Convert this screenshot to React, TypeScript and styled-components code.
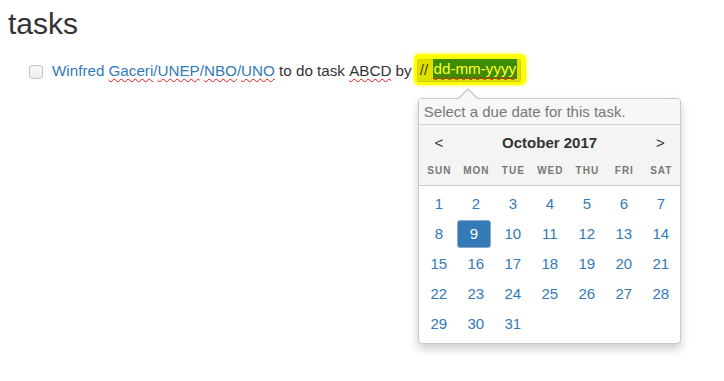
import React from "react";
import styled, { createGlobalStyle } from "styled-components";

const GlobalStyle = createGlobalStyle`
  html, body {
    margin: 0;
    padding: 0;
    background: #ffffff;
    color: #333333;
    font-family: "Liberation Sans", Arial, Helvetica, sans-serif;
    font-size: 15px;
  }
`;

const Page = styled.div`
  box-sizing: border-box;
  min-height: 381px;
  padding: 0 8px;
`;

const Title = styled.h2`
  margin: 7px 0 0;
  font-size: 30px;
  font-weight: 500;
  line-height: 33px;
  color: #333333;
`;

const TaskRow = styled.div`
  display: flex;
  align-items: center;
  height: 23px;
  margin-top: 19px;
  padding-left: 21px;
  line-height: 20px;
  font-size: 15.2px;
`;

const Check = styled.input`
  appearance: none;
  box-sizing: border-box;
  width: 14px;
  height: 14px;
  margin: 3px 9px 0 0;
  border: 1px solid #c4c4c4;
  border-radius: 3px;
  background: linear-gradient(#fafafa, #ececec);
`;

const Misspelled = styled.span`
  text-decoration: underline wavy #e8141b;
  text-decoration-thickness: 1px;
  text-underline-offset: 2px;
  text-decoration-skip-ink: none;
`;

const Owner = styled.span`
  color: #337ab7;
`;

const Plain = styled.span`
  white-space: pre;
`;

const Field = styled.div`
  position: relative;
  display: flex;
  margin-left: 1px;
`;

const DateInput = styled.div`
  box-sizing: border-box;
  display: flex;
  align-items: flex-start;
  width: 104px;
  height: 23px;
  padding-left: 2px;
  border: 1px solid #d2d200;
  background: #e0e000;
  color: #4a4500;
  box-shadow: 1px -1px 0 4px #ffff00, 1px -1px 3px 5px rgba(255, 255, 0, 0.55);
  border-radius: 2px;
  white-space: pre;
`;

const Selection = styled.span`
  display: inline-block;
  margin-top: -1px;
  padding: 0 1px;
  height: 20px;
  background: #3e8c00;
  color: #ffff33;
`;

const Popover = styled.div`
  position: absolute;
  top: 39px;
  left: 1px;
  box-sizing: border-box;
  width: 263px;
  border: 1px solid #c8c8c8;
  border-radius: 4px;
  background: #ffffff;
  box-shadow: 0 5px 10px rgba(0, 0, 0, 0.2);
  font-size: 15px;
  z-index: 5;
`;

const ArrowOuter = styled.span`
  position: absolute;
  top: -11px;
  left: 39px;
  width: 0;
  height: 0;
  border-style: solid;
  border-width: 0 10px 10px 10px;
  border-color: transparent transparent #c8c8c8 transparent;
`;

const ArrowInner = styled.span`
  position: absolute;
  top: -9px;
  left: 40px;
  width: 0;
  height: 0;
  border-style: solid;
  border-width: 0 9px 9px 9px;
  border-color: transparent transparent #f7f7f7 transparent;
`;

const PopTitle = styled.div`
  height: 25px;
  line-height: 25px;
  padding: 0 5px;
  background: #f7f7f7;
  border-bottom: 1px solid #d3d3d3;
  border-radius: 3px 3px 0 0;
  color: #777777;
  font-size: 15px;
`;

const CalHead = styled.div`
  background: #f4f4f4;
  padding: 0 1px 4px;
  border-bottom: 1px solid #cccccc;
`;

const MonthRow = styled.div`
  display: grid;
  grid-template-columns: 37px 1fr 37px;
  height: 36px;
  align-items: center;
  justify-items: center;
  padding-left: 0.5px;
`;

const NavButton = styled.span`
  color: #333333;
  font-size: 15px;
`;

const MonthLabel = styled.span`
  color: #333333;
  font-size: 15px;
  font-weight: bold;
`;

const Grid = styled.div<{ $rowHeight: number }>`
  display: grid;
  grid-template-columns: repeat(7, 37px);
  grid-auto-rows: ${(p) => p.$rowHeight}px;
  align-items: center;
  justify-items: center;
  padding-left: 0.5px;
`;

const DayName = styled.span`
  color: #777777;
  font-size: 10px;
  font-weight: bold;
  letter-spacing: 1px;
  padding-left: 1px;
`;

const CalBody = styled.div`
  padding: 3px 1px 4px;
`;

const Day = styled.span<{ $active?: boolean }>`
  box-sizing: border-box;
  display: flex;
  align-items: center;
  justify-content: center;
  width: 34px;
  height: 28px;
  border-radius: 3px;
  font-size: 15px;
  color: ${(p) => (p.$active ? "#ffffff" : "#337ab7")};
  background: ${(p) => (p.$active ? "#337ab7" : "transparent")};
  border: 1px solid ${(p) => (p.$active ? "#8fa9c6" : "transparent")};
  margin-left: ${(p) => (p.$active ? "-4px" : "0")};
`;

const dayNames = ["SUN", "MON", "TUE", "WED", "THU", "FRI", "SAT"];
const days = Array.from({ length: 31 }, (_, i) => i + 1);

export default function App() {
  return (
    <>
      <GlobalStyle />
      <Page>
        <Title>tasks</Title>
        <TaskRow>
          <Check type="checkbox" />
          <Owner>
            Winfred <Misspelled>Gaceri</Misspelled>/<Misspelled>UNEP</Misspelled>/
            <Misspelled>NBO</Misspelled>/<Misspelled>UNO</Misspelled>
          </Owner>
          <Plain> to do task </Plain>
          <Misspelled>ABCD</Misspelled>
          <Plain> by </Plain>
          <Field>
            <DateInput>
              <span>// </span>
              <Selection>
                <Misspelled>dd-mm-yyyy</Misspelled>
              </Selection>
            </DateInput>
            <Popover>
              <ArrowOuter />
              <ArrowInner />
              <PopTitle>Select a due date for this task.</PopTitle>
              <CalHead>
                <MonthRow>
                  <NavButton>&lt;</NavButton>
                  <MonthLabel>October 2017</MonthLabel>
                  <NavButton>&gt;</NavButton>
                </MonthRow>
                <Grid $rowHeight={20}>
                  {dayNames.map((d) => (
                    <DayName key={d}>{d}</DayName>
                  ))}
                </Grid>
              </CalHead>
              <CalBody>
                <Grid $rowHeight={30}>
                  {days.map((d) => (
                    <Day key={d} $active={d === 9}>
                      {d}
                    </Day>
                  ))}
                </Grid>
              </CalBody>
            </Popover>
          </Field>
        </TaskRow>
      </Page>
    </>
  );
}
